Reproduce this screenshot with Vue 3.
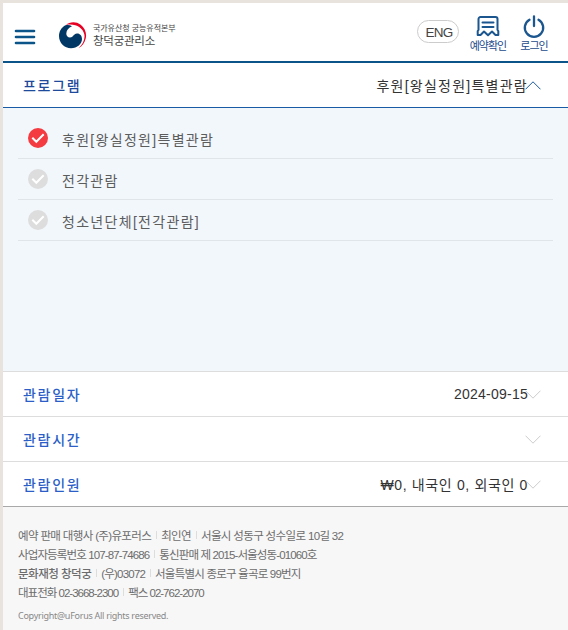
<script setup>
import { ref } from 'vue'

const programs = ['후원[왕실정원]특별관람', '전각관람', '청소년단체[전각관람]']
const selected = ref(0)
const opened = ref(true)

const steps = [
  { label: '관람일자', value: '2024-09-15', kind: 'date' },
  { label: '관람시간', value: '', kind: 'time' },
  { label: '관람인원', value: '₩0, 내국인 0, 외국인 0', kind: 'people' }
]
</script>

<template>
  <div class="page">
    <header class="header">
      <button class="menu" aria-label="메뉴"><i></i><i></i><i></i></button>
      <div class="logo">
        <svg width="28" height="28" viewBox="0 0 28 28">
          <path d="M7 2.800C10.500-.3 17-1 21.700 2.700 26 6 28 11.500 26.700 16.500c-1 4.300-3.500 7.600-7.200 9.700 4.500-4 6.800-9 5.800-14C23.800 5.500 16.500 1 7 2.800z" fill="#e60023" />
          <path d="M6.500 3.300C2.500 5.300 0 9.500 0 14c0 7 5.500 12.300 12 12.300 6.300 0 11-4.500 11-9.300 0-3.500-2.200-5.800-5-5.600-3.700.3-3.500 4-7 4-2.300 0-3.800-1.700-3.700-4C7.500 8.200 9.500 5.700 13 4.300 11 3 8.800 2.500 6.500 3.300z" fill="#003764" />
        </svg>
        <div class="logo-text">
          <span>국가유산청 궁능유적본부</span>
          <strong>창덕궁관리소</strong>
        </div>
      </div>
      <nav class="tools">
        <a class="lang">ENG</a>
        <a class="tool check">
          <svg width="24" height="22" viewBox="0 0 24 22" fill="none" stroke="#1b568f" stroke-width="2" stroke-linejoin="round" stroke-linecap="round">
            <path d="M4.500 2h15A2 2 0 0 1 21.500 4v11l.8 1v4H19.500l-3.500-3.500L12 20.300l-4-3.800L4.500 20H1.700v-4l.8-1V4A2 2 0 0 1 4.500 2z" />
            <path d="M6.500 7.500h11M6.500 12h11" />
          </svg>
          <span>예약확인</span>
        </a>
        <a class="tool login">
          <svg width="24" height="24" viewBox="0 0 24 24" fill="none" stroke="#1b568f" stroke-width="2.300" stroke-linecap="round">
            <path d="M7.500 4.700a9.200 9.200 0 1 0 9 0M12 1.500v9.500" />
          </svg>
          <span>로그인</span>
        </a>
      </nav>
    </header>

    <section class="row program" @click="opened = !opened">
      <h2>프로그램</h2>
      <p>{{ programs[selected] }}</p>
      <svg class="arrow" width="16" height="9" viewBox="0 0 16 9"><path d="M.5 8.300 8 .8l7.500 7.500" /></svg>
    </section>

    <ul v-show="opened" class="panel">
      <li v-for="(name, i) in programs" :key="name" :class="{ on: selected === i }" @click="selected = i">
        <svg width="20" height="20" viewBox="0 0 20 20">
          <circle cx="10" cy="10" r="10" />
          <path d="M4.300 9.800 8.300 13.800l7.400-7.600" />
        </svg>
        <span>{{ name }}</span>
      </li>
    </ul>

    <section v-for="step in steps" :key="step.kind" class="row" :class="step.kind">
      <h2>{{ step.label }}</h2>
      <p>{{ step.value }}</p>
      <svg class="arrow" width="16" height="9" viewBox="0 0 16 9"><path d="M.5.700 8 8.200 15.500.700" /></svg>
    </section>

    <footer class="footer">
      <p class="l1"><span>예약 판매 대행사 (주)유포러스</span><i></i><span>최인연</span><i></i><span>서울시 성동구 성수일로 10길 32</span></p>
      <p class="l2"><span>사업자등록번호 107-87-74686</span><i></i><span>통신판매 제 2015-서울성동-01060호</span></p>
      <p class="l3"><b>문화재청 창덕궁</b><i></i><span>(우)03072</span><i></i><span>서울특별시 종로구 율곡로 99번지</span></p>
      <p class="l4"><span>대표전화 02-3668-2300</span><i></i><span>팩스 02-762-2070</span></p>
      <small>Copyright@uForus All rights reserved.</small>
    </footer>
  </div>
</template>

<style>
body {
  background: #fff;
}
</style>

<style scoped>
* {
  box-sizing: border-box;
}

.page {
  height: 630px;
  overflow: hidden;
  display: flex;
  flex-direction: column;
  border-top: 3px solid #e8e4dd;
  border-left: 3px solid #e8e4dd;
  font-family: "Liberation Sans", "Noto Sans CJK KR", sans-serif;
  background: #f7f7f7;
}

h2,
p,
ul {
  margin: 0;
  padding: 0;
}

.header {
  flex: none;
  height: 60px;
  display: flex;
  align-items: flex-start;
  padding-left: 12px;
  border-bottom: 2px solid #0b5489;
  background: #fff;
}

.menu {
  display: flex;
  flex-direction: column;
  gap: 4px;
  width: 20px;
  margin-top: 27px;
  padding: 0;
  border: 0;
  background: none;
}

.menu i {
  height: 2px;
  width: 20px;
  border-radius: 1px;
  background: #0b5489;
  box-shadow: 0 0 0 0.300px #0b5489;
}

.logo {
  display: flex;
  margin: 19px 0 0 24px;
}

.logo-text {
  display: flex;
  flex-direction: column;
  margin: 2px 0 0 6px;
  color: #444;
  white-space: nowrap;
}

.logo-text span {
  font-size: 8px;
  line-height: 10px;
  letter-spacing: -0.050px;
}

.logo-text strong {
  font-size: 11.500px;
  line-height: 15px;
  font-weight: 400;
  letter-spacing: -0.250px;
}

.tools {
  display: flex;
  margin-left: auto;
  padding-right: 19px;
  color: #1b4b8c;
}

.lang {
  width: 42px;
  height: 23px;
  margin-top: 17px;
  padding-left: 2px;
  border: 1px solid #ccc;
  border-radius: 12px;
  color: #444;
  font-size: 13.500px;
  line-height: 24px;
  text-align: center;
  letter-spacing: -0.800px;
}

.tool {
  display: flex;
  flex-direction: column;
  align-items: center;
  font-size: 11px;
  white-space: nowrap;
  letter-spacing: -1px;
}

.tool span {
  line-height: 14px;
}

.check {
  width: 40px;
  margin: 12px 0 0 9px;
}

.check span {
  margin-top: 2px;
}

.login {
  width: 30px;
  margin: 12px 0 0 11px;
}

.row {
  flex: none;
  height: 45px;
  display: flex;
  align-items: center;
  padding: 0 27px 0 20px;
  border-bottom: 1px solid #ddd;
  background: #fff;
  white-space: nowrap;
}

.row h2 {
  font-size: 14px;
  font-weight: 500;
  letter-spacing: 1.700px;
  color: #2b5fc7;
}

.row p {
  margin-left: auto;
  font-size: 14px;
  letter-spacing: 0.250px;
  color: #333;
}

.arrow {
  fill: none;
  stroke: #ccc;
  stroke-width: 1;
  margin-left: -3px;
}

.row > p,
.row > h2 {
  margin-top: -1px;
}

.program {
  border-color: #1a5ba6;
}

.program h2 {
  color: #1e4a9c;
}

.program p {
  margin-right: -1px;
  letter-spacing: 1.250px;
}

.program .arrow {
  stroke: #1b5a9a;
}

.people {
  border-color: #a9a9a9;
}

.people p {
  margin-right: -1px;
  letter-spacing: 0.650px;
}

.people .arrow,
.program .arrow {
  margin-left: -2px;
}

.panel {
  flex: none;
  height: 264px;
  padding: 10px 15px 0;
  list-style: none;
  background: #f2f7fc;
  border-bottom: 1px solid #ddd;
}

.panel li {
  display: flex;
  align-items: center;
  height: 41px;
  padding-left: 10px;
  border-bottom: 1px solid #e0e5ea;
  font-size: 14px;
  letter-spacing: 1.300px;
  color: #5c5c5c;
}

.panel span {
  margin: 1px 0 0 14px;
}

.panel circle {
  fill: #ddd;
}

.panel path {
  fill: none;
  stroke: #fff;
  stroke-width: 2;
}

.panel .on circle {
  fill: #f43b41;
}

.footer {
  padding: 18px 15px 0;
  font-size: 11.500px;
  color: #6c6c6c;
  white-space: nowrap;
}

.footer p {
  display: flex;
  align-items: center;
  height: 19px;
  letter-spacing: -0.650px;
}

.footer .l2 {
  letter-spacing: -0.880px;
}

.footer .l3 {
  letter-spacing: -0.800px;
}

.footer .l4 {
  letter-spacing: -1px;
}

.footer p i {
  width: 1px;
  height: 8px;
  margin: 0 4px 0 5px;
  background: #ddd;
}

.footer b {
  font-weight: 500;
  letter-spacing: -0.500px;
}

.footer small {
  display: block;
  margin-top: 8px;
  font-family: "Noto Sans", sans-serif;
  font-size: 9px;
  line-height: 14px;
  letter-spacing: -0.270px;
  color: #888;
}
</style>
